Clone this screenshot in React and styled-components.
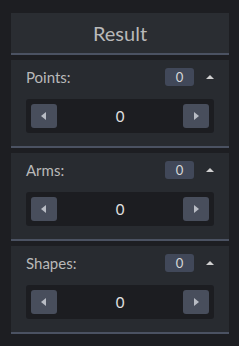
import React from 'react'
import styled, { createGlobalStyle } from 'styled-components'

const GlobalStyle = createGlobalStyle`
  html, body {
    margin: 0;
    padding: 0;
    background: #1d1e22;
  }
  body {
    font-family: Lato, "Open Sans", sans-serif;
  }
`

const Page = styled.div`
  padding: 13px 10px 0 11px;
`

const Panel = styled.div`
  width: 218px;
  display: flex;
  flex-direction: column;
  gap: 5px;
`

const Header = styled.div`
  height: 40px;
  display: flex;
  align-items: center;
  justify-content: center;
  background: #2a2d32;
  border-bottom: 2px solid #4b5262;
  color: #b9b9b9;
  font-size: 20px;
`

const Section = styled.div`
  background: #282b30;
  border-bottom: 2px solid #4b5262;
  padding: 8px 15px 13px 15px;
  display: flex;
  flex-direction: column;
  gap: 13px;
`

const Row = styled.div`
  height: 18px;
  display: flex;
  align-items: center;
`

const Label = styled.span`
  flex: 1;
  color: #b9b9b9;
  font-size: 15px;
`

const Badge = styled.span`
  width: 29px;
  height: 18px;
  border-radius: 3px;
  background: #414859;
  color: #d8d8d8;
  font-size: 13px;
  display: flex;
  align-items: center;
  justify-content: center;
`

const Caret = styled.span`
  width: 0;
  height: 0;
  margin-left: 12px;
  border-left: 4px solid transparent;
  border-right: 4px solid transparent;
  border-bottom: 4px solid #d0d0d0;
`

const Stepper = styled.div`
  height: 34px;
  box-sizing: border-box;
  padding: 5px;
  border-radius: 3px;
  background: #1c1d21;
  display: flex;
  align-items: center;
`

const StepButton = styled.button`
  width: 26px;
  height: 24px;
  padding: 0;
  border: none;
  border-radius: 3px;
  background: #484e5c;
  display: flex;
  align-items: center;
  justify-content: center;
`

const Arrow = styled.span`
  width: 0;
  height: 0;
  border-top: 4px solid transparent;
  border-bottom: 4px solid transparent;
  ${p => (p.$dir === 'left'
    ? 'border-right: 5px solid #b8bcc4; margin-right: 1px;'
    : 'border-left: 5px solid #b8bcc4; margin-left: 1px;')}
`

const Value = styled.span`
  flex: 1;
  text-align: center;
  color: #e0e0e0;
  font-size: 15px;
`

function Field({ label }) {
  return (
    <Section>
      <Row>
        <Label>{label}</Label>
        <Badge>0</Badge>
        <Caret />
      </Row>
      <Stepper>
        <StepButton><Arrow $dir="left" /></StepButton>
        <Value>0</Value>
        <StepButton><Arrow $dir="right" /></StepButton>
      </Stepper>
    </Section>
  )
}

export default function App() {
  return (
    <Page>
      <GlobalStyle />
      <Panel>
        <Header>Result</Header>
        <Field label="Points:" />
        <Field label="Arms:" />
        <Field label="Shapes:" />
      </Panel>
    </Page>
  )
}
